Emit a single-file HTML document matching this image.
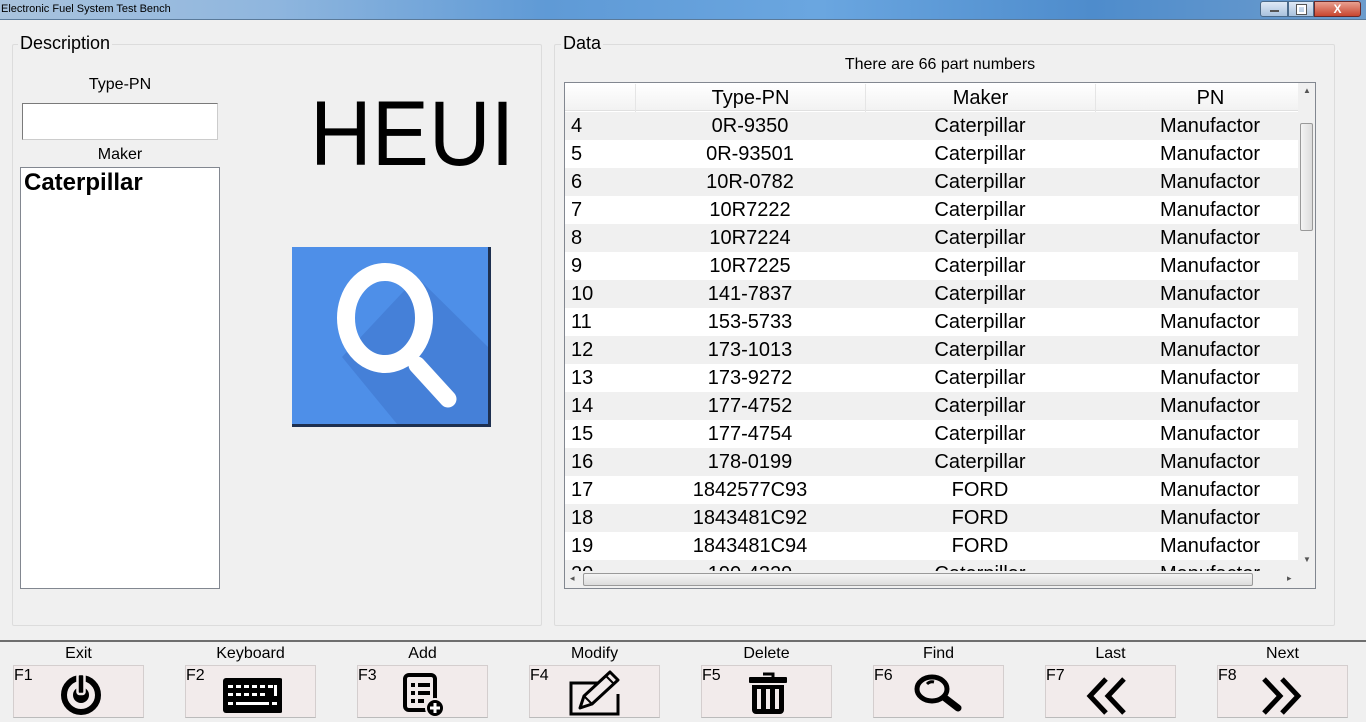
<!DOCTYPE html>
<html><head><style>
*{margin:0;padding:0;box-sizing:border-box}
body{width:1366px;height:722px;overflow:hidden;background:#f0f0f0;font-family:"Liberation Sans",Arial,sans-serif;color:#000;position:relative}
.abs{position:absolute}
#title{left:0;top:0;width:1366px;height:20px;background:linear-gradient(90deg,#a9c3dd 0%,#8fb6de 20%,#5f9ad6 40%,#6aa6e0 60%,#4e8ccc 80%,#6d9ccc 100%);border-bottom:1px solid #5a7a9a}
#title span{position:absolute;left:1px;top:3px;font-size:11px;color:#000}
.grp{border:1px solid #dcdcdc;border-radius:2px}
.lbl{font-size:18px}
.tbl{left:564px;top:82px;width:752px;height:507px;border:1px solid #828790;background:#fff;overflow:hidden}
.row{position:absolute;left:0;width:733px;height:28px;font-size:20px;line-height:29px}
.row div{position:absolute;top:0;text-align:center}
.c0{left:6px;width:60px;text-align:left!important}
.c1{left:70px;width:230px}
.c2{left:300px;width:230px}
.c3{left:530px;width:230px}
.btn{position:absolute;top:665px;width:131px;height:53px;background:#f2ebeb;border:1px solid #d4cece;border-bottom-color:#bbb}
.btn .f{position:absolute;left:0;top:1px;font-size:16px}
.btn svg{position:absolute;left:36px;top:4px}
.bl{position:absolute;top:645px;width:131px;text-align:center;font-size:16px}
</style></head><body>
<div id="title" class="abs"><span>Electronic Fuel System Test Bench</span>
<div class="abs" style="left:1260px;top:1px;width:28px;height:16px;border:1px solid #4a6a8a;border-radius:3px 0 0 3px;background:linear-gradient(#dfe9f5,#a9c2de)"><div class="abs" style="left:9px;top:8px;width:9px;height:2px;background:#fff;border:1px solid #555"></div></div>
<div class="abs" style="left:1288px;top:1px;width:26px;height:16px;border:1px solid #4a6a8a;background:linear-gradient(#dfe9f5,#a9c2de)"><div class="abs" style="left:8px;top:3px;width:9px;height:9px;border:2px solid #fff;outline:1px solid #555"></div></div>
<div class="abs" style="left:1314px;top:1px;width:47px;height:16px;border:1px solid #6a2a2a;border-radius:0 3px 3px 0;background:linear-gradient(#e8a090,#c8452e);color:#fff;font-size:12px;font-weight:bold;text-align:center;line-height:14px">X</div>
</div>

<div class="abs grp" style="left:12px;top:44px;width:530px;height:582px"></div>
<div class="abs lbl" style="left:18px;top:33px;background:#f0f0f0;padding:0 2px">Description</div>
<div class="abs grp" style="left:554px;top:44px;width:781px;height:582px"></div>
<div class="abs lbl" style="left:561px;top:33px;background:#f0f0f0;padding:0 2px">Data</div>

<div class="abs" style="left:20px;top:76px;width:200px;text-align:center;font-size:16px">Type-PN</div>
<div class="abs" style="left:22px;top:103px;width:196px;height:37px;background:#fff;border:1px solid #7a7a7a;border-right-color:#ccc;border-bottom-color:#ccc"></div>
<div class="abs" style="left:20px;top:146px;width:200px;text-align:center;font-size:16px">Maker</div>
<div class="abs" style="left:20px;top:167px;width:200px;height:422px;background:#fff;border:1px solid #828790"></div>
<div class="abs" style="left:24px;top:169px;font-size:24px;font-weight:bold">Caterpillar</div>

<div class="abs" style="left:310px;top:88px;font-size:92px;line-height:92px;transform:scaleX(0.93);transform-origin:0 0">HEUI</div>

<div class="abs" style="left:292px;top:247px;width:199px;height:180px;background:#4e8fe8;border-right:3px solid #1e3050;border-bottom:3px solid #1e3050;overflow:hidden">
<svg width="199" height="180" viewBox="0 0 199 180"><polygon points="125,30 196,100 196,177 105,177 50,110" fill="#4580d8"/><ellipse cx="93" cy="71" rx="39" ry="46" fill="none" stroke="#fff" stroke-width="18"/><line x1="125" y1="118" x2="156" y2="152" stroke="#fff" stroke-width="17" stroke-linecap="round"/></svg></div>

<div class="abs" style="left:564px;top:56px;width:752px;text-align:center;font-size:16px">There are 66 part numbers</div>
<div class="abs tbl">
<div class="row" style="top:1px;height:27px;background:linear-gradient(#fff,#f2f2f2);border-bottom:1px solid #e0e0e0"><div class="c1" style="border-left:1px solid #e5e5e5">Type-PN</div><div class="c2" style="border-left:1px solid #e5e5e5">Maker</div><div class="c3" style="border-left:1px solid #e5e5e5">PN</div></div>
<div class="row" style="top:29px;background:#f0f0f0"><div class="c0">4</div><div class="c1">0R-9350</div><div class="c2">Caterpillar</div><div class="c3">Manufactor</div></div>
<div class="row" style="top:57px"><div class="c0">5</div><div class="c1">0R-93501</div><div class="c2">Caterpillar</div><div class="c3">Manufactor</div></div>
<div class="row" style="top:85px;background:#f0f0f0"><div class="c0">6</div><div class="c1">10R-0782</div><div class="c2">Caterpillar</div><div class="c3">Manufactor</div></div>
<div class="row" style="top:113px"><div class="c0">7</div><div class="c1">10R7222</div><div class="c2">Caterpillar</div><div class="c3">Manufactor</div></div>
<div class="row" style="top:141px;background:#f0f0f0"><div class="c0">8</div><div class="c1">10R7224</div><div class="c2">Caterpillar</div><div class="c3">Manufactor</div></div>
<div class="row" style="top:169px"><div class="c0">9</div><div class="c1">10R7225</div><div class="c2">Caterpillar</div><div class="c3">Manufactor</div></div>
<div class="row" style="top:197px;background:#f0f0f0"><div class="c0">10</div><div class="c1">141-7837</div><div class="c2">Caterpillar</div><div class="c3">Manufactor</div></div>
<div class="row" style="top:225px"><div class="c0">11</div><div class="c1">153-5733</div><div class="c2">Caterpillar</div><div class="c3">Manufactor</div></div>
<div class="row" style="top:253px;background:#f0f0f0"><div class="c0">12</div><div class="c1">173-1013</div><div class="c2">Caterpillar</div><div class="c3">Manufactor</div></div>
<div class="row" style="top:281px"><div class="c0">13</div><div class="c1">173-9272</div><div class="c2">Caterpillar</div><div class="c3">Manufactor</div></div>
<div class="row" style="top:309px;background:#f0f0f0"><div class="c0">14</div><div class="c1">177-4752</div><div class="c2">Caterpillar</div><div class="c3">Manufactor</div></div>
<div class="row" style="top:337px"><div class="c0">15</div><div class="c1">177-4754</div><div class="c2">Caterpillar</div><div class="c3">Manufactor</div></div>
<div class="row" style="top:365px;background:#f0f0f0"><div class="c0">16</div><div class="c1">178-0199</div><div class="c2">Caterpillar</div><div class="c3">Manufactor</div></div>
<div class="row" style="top:393px"><div class="c0">17</div><div class="c1">1842577C93</div><div class="c2">FORD</div><div class="c3">Manufactor</div></div>
<div class="row" style="top:421px;background:#f0f0f0"><div class="c0">18</div><div class="c1">1843481C92</div><div class="c2">FORD</div><div class="c3">Manufactor</div></div>
<div class="row" style="top:449px"><div class="c0">19</div><div class="c1">1843481C94</div><div class="c2">FORD</div><div class="c3">Manufactor</div></div>
<div class="row" style="top:477px;background:#f0f0f0"><div class="c0">20</div><div class="c1">190-4329</div><div class="c2">Caterpillar</div><div class="c3">Manufactor</div></div>
<div class="abs" style="left:733px;top:0;width:17px;height:488px;background:#f0f0f0"><div class="abs" style="left:2px;top:40px;width:13px;height:108px;background:linear-gradient(90deg,#f4f4f4,#dcdcdc);border:1px solid #999;border-radius:2px"></div><div class="abs" style="left:5px;top:3px;font-size:8px;color:#555">▲</div><div class="abs" style="left:5px;top:472px;font-size:8px;color:#555">▼</div></div>
<div class="abs" style="left:0;top:488px;width:750px;height:17px;background:#f0f0f0"><div class="abs" style="left:18px;top:2px;width:670px;height:13px;background:linear-gradient(#f4f4f4,#dcdcdc);border:1px solid #999;border-radius:2px"></div><div class="abs" style="left:5px;top:2px;font-size:9px;color:#555">◂</div><div class="abs" style="left:722px;top:2px;font-size:9px;color:#555">▸</div></div>
</div>

<div class="abs" style="left:0;top:640px;width:1366px;height:2px;background:#6e6e6e"></div>

<div class="bl" style="left:13px">Exit</div><div class="btn" style="left:13px"><span class="f">F1</span><svg width="60" height="46" viewBox="0 0 60 46"><circle cx="31" cy="25" r="17" fill="none" stroke="#000" stroke-width="6"/><circle cx="31" cy="25" r="8" fill="#000"/><rect x="27.5" y="4" width="7" height="20" rx="2" fill="#000" stroke="#f2ebeb" stroke-width="2.5"/></svg></div>
<div class="bl" style="left:185px">Keyboard</div><div class="btn" style="left:185px"><span class="f">F2</span><svg width="60" height="46" viewBox="0 0 60 46"><rect x="1" y="8" width="60" height="35" rx="3" fill="#000"/><g fill="#fff"><rect x="6" y="15" width="5" height="3"/><rect x="14" y="15" width="5" height="3"/><rect x="22" y="15" width="5" height="3"/><rect x="30" y="15" width="5" height="3"/><rect x="38" y="15" width="5" height="3"/><rect x="46" y="15" width="5" height="3"/><rect x="6" y="23" width="5" height="3"/><rect x="14" y="23" width="5" height="3"/><rect x="22" y="23" width="5" height="3"/><rect x="30" y="23" width="5" height="3"/><rect x="38" y="23" width="5" height="3"/><rect x="52" y="15" width="3" height="11"/><rect x="6" y="32" width="5" height="3"/><rect x="14" y="32" width="33" height="3"/><rect x="50" y="32" width="5" height="3"/></g></svg></div>
<div class="bl" style="left:357px">Add</div><div class="btn" style="left:357px"><span class="f">F3</span><svg width="60" height="46" viewBox="0 0 60 46"><rect x="11" y="5" width="30" height="35" rx="4" fill="none" stroke="#000" stroke-width="4"/><g fill="#000"><rect x="17" y="13" width="4" height="4"/><rect x="24" y="13" width="12" height="4"/><rect x="17" y="21" width="4" height="4"/><rect x="24" y="21" width="12" height="4"/><rect x="17" y="29" width="4" height="4"/><rect x="24" y="29" width="6" height="4"/></g><circle cx="41" cy="38" r="9" fill="#000" stroke="#f2ebeb" stroke-width="2"/><path d="M41 33v10M36 38h10" stroke="#fff" stroke-width="3"/></svg></div>
<div class="bl" style="left:529px">Modify</div><div class="btn" style="left:529px"><span class="f">F4</span><svg width="60" height="46" viewBox="0 0 60 46"><path d="M38 13H5v31h47V24" fill="none" stroke="#000" stroke-width="3"/><path d="M14 38l4-12 26-24 8 8-26 24z" fill="#f2ebeb" stroke="#000" stroke-width="3" stroke-linejoin="round"/><path d="M40 6l8 8M18 26l8 8" stroke="#000" stroke-width="2"/></svg></div>
<div class="bl" style="left:701px">Delete</div><div class="btn" style="left:701px"><span class="f">F5</span><svg width="60" height="46" viewBox="0 0 60 46"><path d="M25 4h10v4" fill="none" stroke="#000" stroke-width="3"/><rect x="11" y="7" width="38" height="6" rx="1" fill="#000"/><path d="M14 15h32v25a4 4 0 0 1-4 4H18a4 4 0 0 1-4-4z" fill="#000"/><g fill="#f2ebeb"><rect x="19" y="19" width="4" height="20"/><rect x="28" y="19" width="4" height="20"/><rect x="37" y="19" width="4" height="20"/></g></svg></div>
<div class="bl" style="left:873px">Find</div><div class="btn" style="left:873px"><span class="f">F6</span><svg width="60" height="46" viewBox="0 0 60 46"><ellipse cx="22" cy="19" rx="15" ry="12" fill="none" stroke="#000" stroke-width="5"/><path d="M17 14q3-3 7-2" stroke="#000" stroke-width="3" fill="none"/><line x1="35" y1="28" x2="48" y2="38" stroke="#000" stroke-width="7" stroke-linecap="round"/></svg></div>
<div class="bl" style="left:1045px">Last</div><div class="btn" style="left:1045px"><span class="f">F7</span><svg width="60" height="46" viewBox="0 0 60 46"><path d="M24 9L8 26l16 17M42 9L26 26l16 17" fill="none" stroke="#000" stroke-width="5"/></svg></div>
<div class="bl" style="left:1217px">Next</div><div class="btn" style="left:1217px"><span class="f">F8</span><svg width="60" height="46" viewBox="0 0 60 46"><path d="M10 9l16 17-16 17M28 9l16 17-16 17" fill="none" stroke="#000" stroke-width="5"/></svg></div>
</body></html>
